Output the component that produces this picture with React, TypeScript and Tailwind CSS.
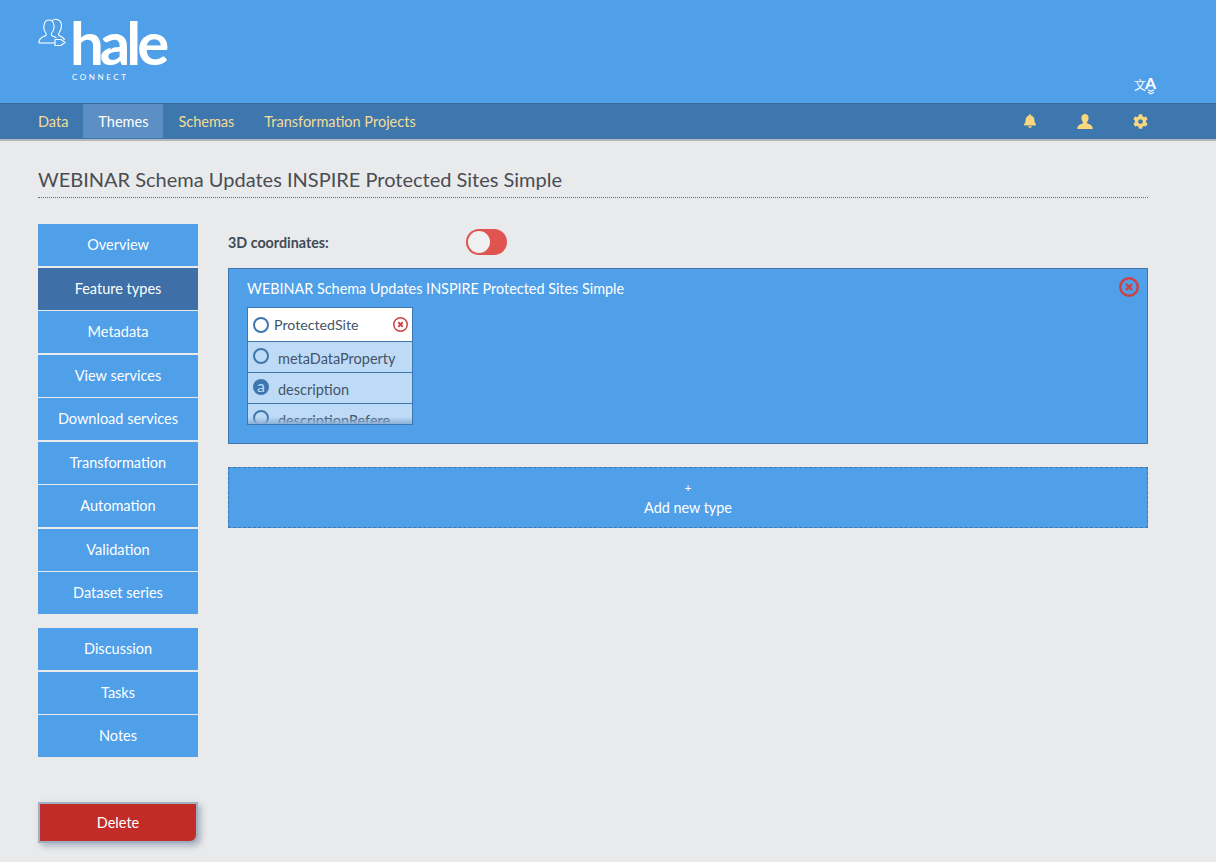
import { FaBell, FaCog } from "react-icons/fa";

const font = "font-['Lato','Noto_Sans',sans-serif]";

const sideTop = [
  "Overview",
  "Feature types",
  "Metadata",
  "View services",
  "Download services",
  "Transformation",
  "Automation",
  "Validation",
  "Dataset series",
];
const sideBottom = ["Discussion", "Tasks", "Notes"];

const CloseCircle = ({ size, stroke }: { size: number; stroke: number }) => (
  <svg width={size} height={size} viewBox="0 0 20 20" fill="none" stroke="#cf4040">
    <circle cx="10" cy="10" r={10 - stroke / 2} strokeWidth={stroke} />
    <path d="M7 7l6 6M13 7l-6 6" strokeWidth="2.4" />
  </svg>
);

const Logo = () => (
  <div className="relative h-[72px] w-[135px] text-white">
    <svg className="absolute left-0 top-[8px]" width="29" height="29" viewBox="0 0 29 29" fill="none" stroke="white" strokeWidth="1.1">
      <path d="M1 25c-.5-4 3-6 6-7 1.500-.5 1.500-2 .5-3.500C6 12.500 5.500 10 6 7.500 6.500 3.500 9 2 11 2s4.500 1.500 5 5.500c.3 2.500-.3 5-2 7-1 1.500-1 3 .5 3.500 1.500.5 3 1 4 2" />
      <path d="M1 25h16" />
      <path d="M14 3c1-1.300 3-2 5-1.500 3 .7 4.500 3 4.500 6s-1 5.500-2.500 7.500c-.8 1.200-.5 2.500 1 3 2 .8 4 2 4.500 4" />
      <path d="M17 21.500h6l4 3-4 3h-6z" />
    </svg>
    <span className="absolute left-[32px] top-[7px] font-['Lato',sans-serif] text-[60px] font-bold leading-[50px] tracking-[-4px]">hale</span>
    <svg className="absolute left-[66px] top-[31px]" width="13" height="9" viewBox="0 0 13 9" fill="#4f9fe9">
      <path d="M0 0l5 4.500-5 4.500 2-4.500zM6 0l6 4.500-6 4.500 2-4.500z" />
    </svg>
    <span className="absolute left-[34px] top-[62px] font-['Lato',sans-serif] text-[8px] leading-[10px] tracking-[2.6px]">CONNECT</span>
  </div>
);

const SideButton = ({ label, active }: { label: string; active?: boolean }) => (
  <div className={`flex h-[42px] w-[160px] items-center justify-center text-[14.500px] text-white ${active ? "bg-[#3e6fa6]" : "bg-[#4f9fe9]"}`}>
    {label}
  </div>
);

const Row = ({ label, attr }: { label: string; attr?: boolean }) => (
  <div className="flex h-[31px] shrink-0 items-start gap-[9px] border-b border-[#3e76ae] pl-[5px] text-[14.500px] leading-[20px] text-[#44546a]">
    {attr ? (
      <span className="mt-[6px] flex h-4 w-4 shrink-0 items-center justify-center rounded-full bg-[#3e76ae] pb-[2px] text-[16px] leading-none text-[#bfdcf6]">a</span>
    ) : (
      <span className="mt-[6px] h-4 w-4 shrink-0 rounded-full border-2 border-[#3e76ae]" />
    )}
    <span className="mt-[7px] whitespace-nowrap">{label}</span>
  </div>
);

export default function App() {
  return (
    <div className={`min-h-screen bg-[#e9eaec] text-[#44484e] ${font}`}>
      <header className="flex h-[103px] justify-between bg-[#4f9fe9] pl-[38px] pr-[60px] pt-[10px]">
        <Logo />
        <div className="relative mt-[65px] flex h-[22px] w-[22px] items-start text-white">
          <span className="font-['Noto_Sans_CJK_SC',sans-serif] text-[12px] leading-[20px]">文</span>
          <span className="ml-[-1px] text-[16px] font-bold leading-[15px]">A</span>
          <svg className="absolute right-[1px] top-[14px]" width="8" height="6" viewBox="0 0 8 6" fill="none" stroke="white" strokeWidth="1.2">
            <path d="M1 0.800l3 1.500 3-1.500M1 3.300l3 1.500 3-1.500" />
          </svg>
        </div>
      </header>

      <nav className="flex h-[38px] items-stretch justify-between border-b-2 border-b-[#b4b6b9] border-t border-t-[#38699b] bg-[#3e76ae] pb-[1px] pl-[23px] pr-[68px] text-[14.500px] text-[#f3dc94]">
        <div className="flex">
          <a className="flex items-center px-[15px] pt-[1px]">Data</a>
          <a className="flex items-center bg-[#5c90c4] px-[15px] pt-[1px] text-white">Themes</a>
          <a className="flex items-center px-[15px] pt-[1px]">Schemas</a>
          <a className="flex items-center px-[15px] pt-[1px]">Transformation Projects</a>
        </div>
        <div className="flex items-center gap-[40px] text-[#f8d77e]">
          <FaBell size={14} />
          <svg width="16" height="15" viewBox="0 0 16 15" fill="currentColor">
            <path d="M8 0c2.300 0 3.600 1.700 3.600 4 0 1.700-.7 3.200-1.600 4.200 0 .8.3 1.200 1 1.500 2 .8 4 1.500 4.500 3.300l.2 2H.3l.2-2C1 11.200 3 10.500 5 9.700c.7-.3 1-.7 1-1.500C5.100 7.200 4.400 5.700 4.400 4 4.400 1.700 5.700 0 8 0z" />
          </svg>
          <FaCog size={15} />
        </div>
      </nav>

      <main className="px-[38px] pr-[68px] pt-[25px]">
        <h1 className="border-b border-dotted border-[#3e76ae] pb-[5px] text-[20px] leading-[26px] text-[#4a4d52]">
          WEBINAR Schema Updates INSPIRE Protected Sites Simple
        </h1>

        <div className="mt-[26px] flex gap-[30px]">
          <aside className="flex w-[160px] shrink-0 flex-col">
            <div className="flex flex-col gap-[1.500px]">
              {sideTop.map((s) => (
                <SideButton key={s} label={s} active={s === "Feature types"} />
              ))}
            </div>
            <div className="mt-[14px] flex flex-col gap-[1.500px]">
              {sideBottom.map((s) => (
                <SideButton key={s} label={s} />
              ))}
            </div>
            <button className="mt-[45px] flex h-[41px] w-[160px] items-center justify-center rounded-br-[8px] border-2 border-[#9fb1c0] bg-[#c12c26] text-[14.500px] text-white shadow-[3px_3px_6px_rgba(90,110,140,0.45)]">
              Delete
            </button>
          </aside>

          <section className="flex-1">
            <div className="flex h-[44px] items-start">
              <span className="mt-[8px] w-[238px] text-[14.300px] font-bold leading-[22px] text-[#3f4a57]">3D coordinates:</span>
              <span className="mt-[5px] flex h-[26px] w-[41px] items-center rounded-full bg-[#e05450] pl-[2px]">
                <span className="h-[22px] w-[22px] rounded-full bg-[#eef0f2]" />
              </span>
            </div>

            <div className="relative h-[176px] border border-[#3e76ae] bg-[#4f9fe9] pl-[18px] pt-[9px]">
              <div className="text-[14.400px] leading-[22px] text-white">WEBINAR Schema Updates INSPIRE Protected Sites Simple</div>
              <span className="absolute right-[8px] top-[8px]">
                <CloseCircle size={20} stroke={2.4} />
              </span>
              <div className="relative mt-[7px] flex h-[118px] w-[166px] flex-col overflow-hidden border border-[#3e76ae] bg-[#bddbf6]">
                <div className="flex h-[34px] shrink-0 items-center justify-between border-b border-[#3e76ae] bg-white pl-[5px] pr-[4px] text-[14.200px] text-[#44546a]">
                  <span className="flex items-center gap-[5px]">
                    <span className="mt-[2px] h-4 w-4 rounded-full border-2 border-[#3e76ae]" />
                    ProtectedSite
                  </span>
                  <CloseCircle size={15} stroke={2} />
                </div>
                <Row label="metaDataProperty" />
                <Row label="description" attr />
                <Row label="descriptionRefere" />
                <div className="absolute inset-x-0 bottom-0 h-[7px] bg-gradient-to-b from-transparent to-[#8db0d6]" />
              </div>
            </div>

            <div className="mt-[23px] flex h-[61px] flex-col items-center justify-center border border-dashed border-[#3e76ae] bg-[#4f9fe9] text-[14.400px] leading-[20px] text-white">
              <span className="text-[12px]">+</span>
              <span>Add new type</span>
            </div>
          </section>
        </div>
      </main>
    </div>
  );
}
